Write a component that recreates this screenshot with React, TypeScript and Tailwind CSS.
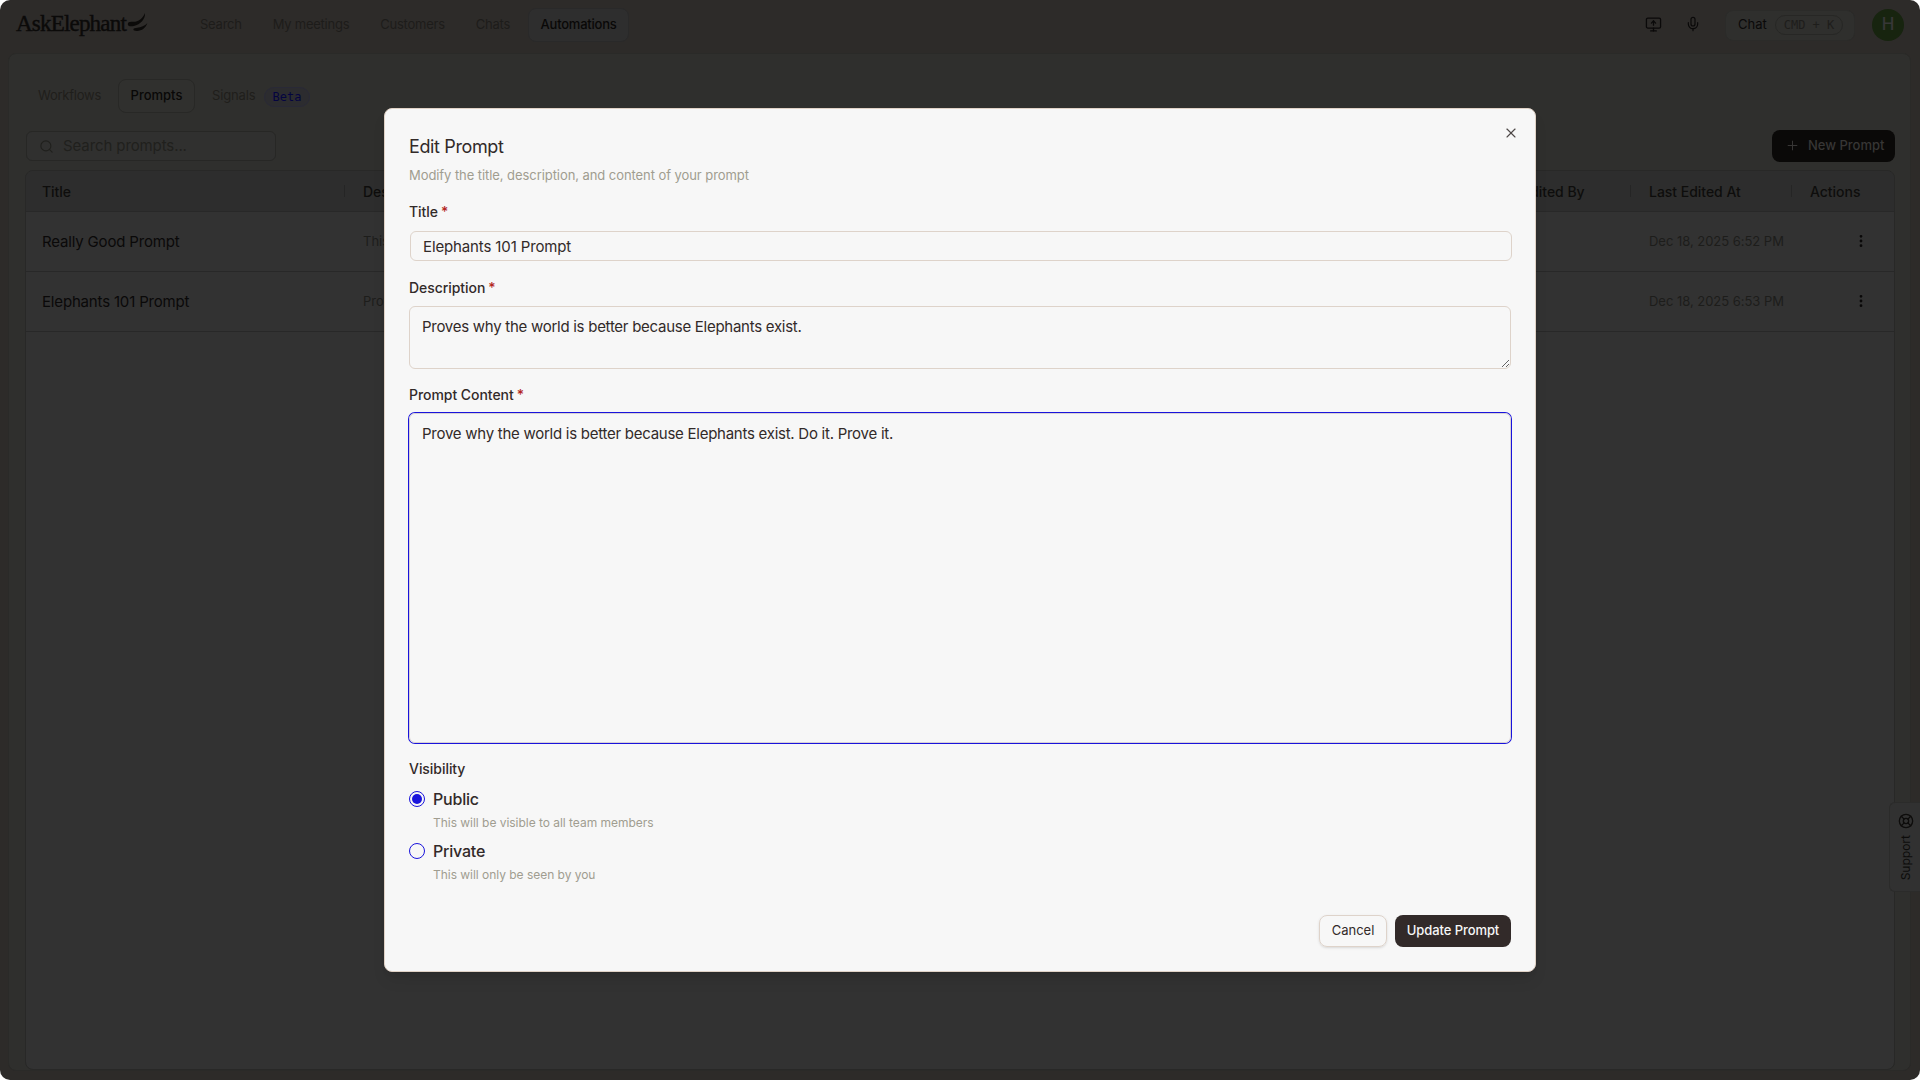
import type { ReactNode } from "react";
import { EllipsisVertical, LifeBuoy, Mic, MonitorUp, Plus, Search, X } from "lucide-react";

function Logo() {
  return (
    <div className="flex h-[30px] items-center text-[#0b0a09]">
      <span className="w-[111px] whitespace-nowrap font-['Liberation_Serif',serif] text-[23px] leading-[30px] tracking-[-0.8px] [-webkit-text-stroke:0.4px_#0b0a09]">
        AskElephant
      </span>
      <svg className="mb-1" width="21" height="20" viewBox="0 0 21 20" fill="currentColor">
        <path d="M18 1c.6 5.800-4.500 11.700-11.200 13C3.500 14.600.8 14.300.8 12.200c0-2 2-2.700 4.400-2.400C11 10.300 15.500 6.800 18 1z" />
        <path d="M20.300 11.200c-1.300 4.300-5.400 7.700-10.300 7.700-2.300 0-4-.8-3.600-1.700.4-1 1.900-1 3.900-1.400 3.800-.6 7.400-2 10-4.600z" />
      </svg>
    </div>
  );
}

const navItems = ["Search", "My meetings", "Customers", "Chats"];

function TopBar() {
  return (
    <header className="flex h-[53px] items-start justify-between pl-4 pr-4 pt-2">
      <div className="flex">
        <div className="mt-px w-[171px]">
          <Logo />
        </div>
        <nav className="flex h-[34px] items-center gap-[5px] text-[13px] tracking-[-0.24px]">
          {navItems.map((item) => (
            <span key={item} className="px-[13px] text-[#1d1c1a]">
              {item}
            </span>
          ))}
          <span className="flex h-[34px] w-[101px] items-center justify-center rounded-lg border border-[#292929] bg-[#2e2e2e] font-medium tracking-[-0.22px] text-[#090807]">
            Automations
          </span>
        </nav>
      </div>
      <div className="flex h-[34px] items-center text-[#0a0909]">
        <MonitorUp className="mb-[2px] mr-[23px]" size={17} strokeWidth={1.8} />
        <Mic className="mb-[2px] mr-[24px]" size={16} strokeWidth={1.8} />
        <div className="mr-[17px] flex h-[31px] w-[130px] items-center gap-[9px] rounded-lg border border-[#2b2b29] bg-[#2f2f2d] pl-3 text-[13px]">
          <span className="w-7">Chat</span>
          <span className="flex h-5 w-[68px] items-center justify-center rounded-full border border-[#272725] font-['DejaVu_Sans_Mono',monospace] text-[12px] text-[#1e1d1b]">
            CMD + K
          </span>
        </div>
        <div className="flex size-8 items-center justify-center rounded-full bg-[#17240f] text-[17px] font-medium text-[#373737]">H</div>
      </div>
    </header>
  );
}

function Tabs() {
  return (
    <div className="flex h-[34px] items-center text-[13px]">
      <span className="w-[80px] tracking-[-0.24px] text-[#1f1e1b]">Workflows</span>
      <span className="flex h-[34px] w-[77px] items-center justify-center rounded-lg border border-[#282826] bg-[#30302e] font-medium text-[#090807]">
        Prompts
      </span>
      <span className="ml-[17px] w-[52px] tracking-[-0.15px] text-[#1f1e1b]">Signals</span>
      <span className="mt-[2px] flex h-5 w-[46px] items-center justify-center rounded-full border border-[#292936] bg-[#2c2c2f] font-['DejaVu_Sans_Mono',monospace] text-[12px] text-[#040440]">
        Beta
      </span>
    </div>
  );
}

const rows = [
  { title: "Really Good Prompt", description: "This is a really good prompt", editedAt: "Dec 18, 2025 6:52 PM" },
  { title: "Elephants 101 Prompt", description: "Proves why the world is better because Elephants exist.", editedAt: "Dec 18, 2025 6:53 PM" },
];

const columns = "grid grid-cols-[319px_1165px_121px_161px_1fr] items-center";

function HeadCell({ children, divider = true }: { children: ReactNode; divider?: boolean }) {
  return (
    <div className={divider ? "flex items-center justify-between" : "flex items-center"}>
      <span>{children}</span>
      {divider && <span className="h-3 w-px bg-[#252525]" />}
    </div>
  );
}

function PromptTable() {
  return (
    <div className="flex-1 overflow-hidden rounded-lg border border-[#282827] bg-[#323232]">
      <div className={`${columns} h-[41px] border-b border-[#282828] bg-[#2d2d2d] text-[14px] font-medium tracking-[-0.03px] text-[#0e0d0c]`}>
        <div className="pl-4">
          <HeadCell>Title</HeadCell>
        </div>
        <div className="pl-[18px]">Description</div>
        <div className="-ml-[20px]">
          <HeadCell>Last Edited By</HeadCell>
        </div>
        <div className="pl-[18px]">
          <HeadCell>Last Edited At</HeadCell>
        </div>
        <div className="pl-[18px]">
          <HeadCell divider={false}>Actions</HeadCell>
        </div>
      </div>
      {rows.map((row) => (
        <div key={row.title} className={`${columns} h-[60px] border-b border-[#282828] text-[13px] text-[#1d1d1b]`}>
          <div className="pl-4 pt-px text-[15px] tracking-[-0.17px] text-[#0a0909]">{row.title}</div>
          <div className="pl-[18px] pt-px">{row.description}</div>
          <div />
          <div className="pl-[18px] pt-px tracking-[-0.03px]">{row.editedAt}</div>
          <div className="flex justify-end pb-px pr-[25px] text-[#090808]">
            <EllipsisVertical size={16} strokeWidth={2.2} />
          </div>
        </div>
      ))}
    </div>
  );
}

function SupportTab() {
  return (
    <div className="absolute right-0 top-[802px] flex h-[90px] w-[31px] flex-col items-center gap-1.5 rounded-l-md border border-r-0 border-[#2b2b2a] bg-[#313131] pl-px pt-[10px] text-[#0d0c0b]">
      <LifeBuoy className="shrink-0" size={16} strokeWidth={2} />
      <span className="rotate-180 text-[12px] leading-4 [writing-mode:vertical-rl]">Support</span>
    </div>
  );
}

function Label({ children, required = true }: { children: ReactNode; required?: boolean }) {
  return (
    <label className="flex h-5 items-center gap-[3px] text-[14px] font-medium tracking-[-0.05px]">
      {children}
      {required && <span className="text-[#b3261e]">*</span>}
    </label>
  );
}

function RadioOption({ label, hint, checked = false }: { label: string; hint: string; checked?: boolean }) {
  return (
    <div className="h-[52px]">
      <div className="flex h-6 items-center gap-2">
        <span className="flex size-4 items-center justify-center rounded-full border border-[#1a14dc]">
          {checked && <span className="size-2.5 rounded-full bg-[#1a14dc]" />}
        </span>
        <span className="text-[16px] font-medium tracking-[-0.2px]">{label}</span>
      </div>
      <p className="mt-0.5 pl-6 text-[12px] leading-5 tracking-[-0.03px] text-[#a09d90]">{hint}</p>
    </div>
  );
}

function EditPromptDialog() {
  return (
    <div className="relative flex h-[864px] w-[1152px] flex-col rounded-lg border border-[#e0d2c6] bg-[#f7f7f7] px-6 text-[#322a29] shadow-lg">
      <X className="absolute right-4 top-4 text-[#4d4746]" size={16} strokeWidth={1.7} />
      <h2 className="mt-[25px] text-[18px] leading-[26px] tracking-[-0.37px]">Edit Prompt</h2>
      <p className="mt-[5px] text-[13px] leading-5 tracking-[-0.07px] text-[#a09d90]">
        Modify the title, description, and content of your prompt
      </p>
      <div className="mt-4">
        <Label>Title</Label>
      </div>
      <input
        className="ml-px mt-[10px] h-[30px] w-[1102px] rounded-md border border-[#ded3ca] bg-transparent px-3 text-[15px] tracking-[-0.13px] outline-none"
        defaultValue="Elephants 101 Prompt"
      />
      <div className="mt-4">
        <Label>Description</Label>
      </div>
      <textarea
        className="mt-[9px] h-[63px] w-[1102px] shrink-0 resize rounded-md border border-[#ded3ca] bg-transparent px-3 py-2 text-[15px] leading-6 tracking-[-0.27px] outline-none"
        defaultValue="Proves why the world is better because Elephants exist."
      />
      <div className="mt-[15px]">
        <Label>Prompt Content</Label>
      </div>
      <textarea
        className="mt-[9px] h-[330px] w-[1102px] shrink-0 resize-none rounded-md border border-[#d8d2d4] bg-transparent px-3 py-2 text-[15px] leading-6 tracking-[-0.26px] outline-none ring-1 ring-[#1a14dc]"
        defaultValue="Prove why the world is better because Elephants exist. Do it. Prove it."
      />
      <div className="mt-[15px]">
        <Label required={false}>Visibility</Label>
      </div>
      <div className="mt-[9px]">
        <RadioOption label="Public" hint="This will be visible to all team members" checked />
        <RadioOption label="Private" hint="This will only be seen by you" />
      </div>
      <div className="mt-auto mb-6 flex justify-end gap-2 text-[13px]">
        <button className="h-8 w-[68px] rounded-lg border border-[#ded3ca] shadow-sm">Cancel</button>
        <button className="h-8 w-[116px] rounded-lg bg-[#322a29] font-medium tracking-[-0.08px] text-[#f7f7f7]">
          Update Prompt
        </button>
      </div>
    </div>
  );
}

export default function App() {
  return (
    <div className="relative flex h-[1080px] w-[1920px] flex-col overflow-hidden rounded-[10px] bg-[#2d2b29] font-['Inter',sans-serif]">
      <TopBar />
      <main className="ml-2 mr-[9px] mb-[9px] flex flex-1 flex-col rounded-lg border border-[#2a2a28] bg-[#2f2f2d] pl-4 pr-[15px] pt-[25px]">
        <div className="pl-[13px]">
          <Tabs />
        </div>
        <div className="mb-2 mt-4 flex h-[33px] items-center justify-between">
          <div className="ml-px mt-px flex h-[30px] w-[250px] items-center gap-[9px] rounded-md border border-[#272725] bg-[#30302f] pl-3 text-[15px] tracking-[-0.1px] text-[#20201d]">
            <Search size={15} strokeWidth={1.8} />
            Search prompts...
          </div>
          <div className="flex h-8 w-[123px] items-center gap-[8px] rounded-lg bg-[#0a0908] pl-[13px] text-[13px] font-medium text-[#373635]">
            <Plus size={15} strokeWidth={1.6} />
            New Prompt
          </div>
        </div>
        <PromptTable />
      </main>
      <SupportTab />
      <div className="absolute inset-0 flex items-center justify-center">
        <EditPromptDialog />
      </div>
    </div>
  );
}
